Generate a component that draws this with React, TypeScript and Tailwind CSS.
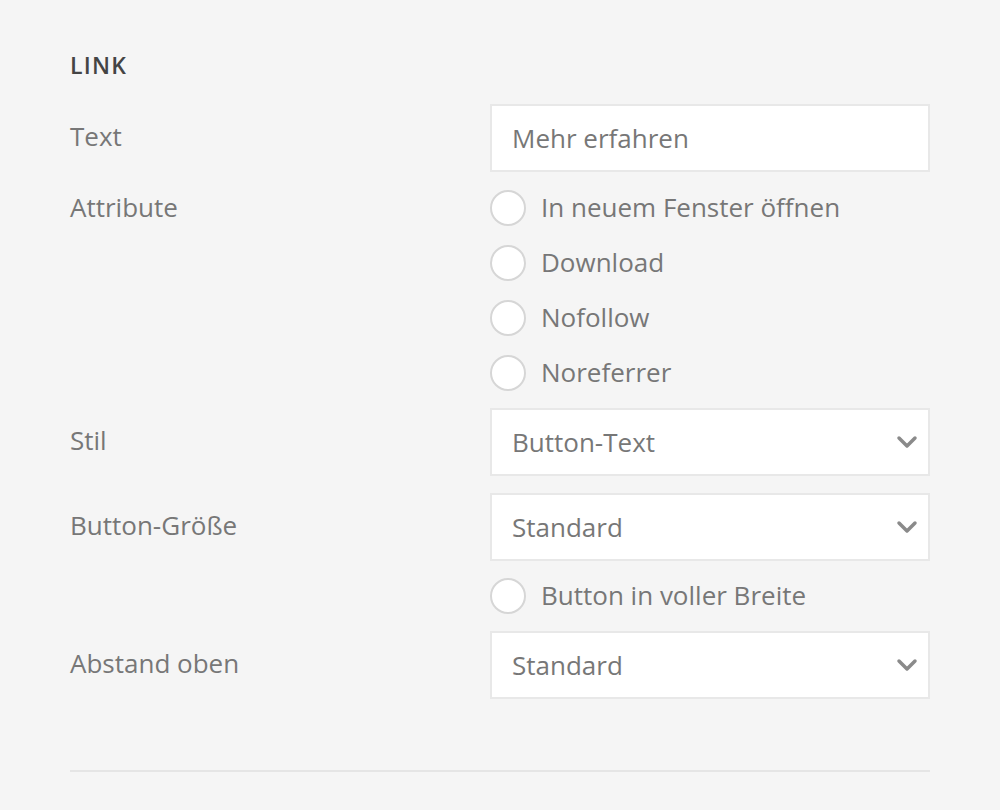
import React from "react";

const Chevron = () => (
  <svg width="22" height="14" viewBox="0 0 22 14" className="shrink-0">
    <path d="M3 3 L11 11 L19 3" fill="none" stroke="#8a8a8a" strokeWidth="3.5" strokeLinecap="round" strokeLinejoin="round" />
  </svg>
);

const Radio = ({ label }: { label: string }) => (
  <div className="flex items-center h-[36px]">
    <span className="w-[36px] h-[36px] rounded-full border-2 border-[#d6d6d6] bg-white shrink-0" />
    <span className="ml-[15px] text-[26px] text-[#777777] leading-[36px] mb-[3px]">{label}</span>
  </div>
);

const Select = ({ value }: { value: string }) => (
  <div className="h-[68px] bg-white border-2 border-[#e8e8e8] flex items-center justify-between pl-[20px] pr-[10px]">
    <span className="text-[26px] text-[#777777]">{value}</span>
    <Chevron />
  </div>
);

const Label = ({ children }: { children: React.ReactNode }) => (
  <div className="text-[26px] text-[#777777] leading-[36px]">{children}</div>
);

export default function App() {
  return (
    <div
      className="w-[1000px] h-[810px] bg-[#f5f5f5] px-[70px] pt-[49px]"
      style={{ fontFamily: '"Open Sans", "Noto Sans", sans-serif' }}
    >
      <div className="text-[23px] font-semibold text-[#444444] tracking-[1.2px] leading-[32px]">LINK</div>
      <div className="mt-[23px] grid grid-cols-[420px_440px] gap-y-[17px]">
        <div className="pt-[14px]"><Label>Text</Label></div>
        <div className="h-[68px] bg-white border-2 border-[#e8e8e8] flex items-center pl-[20px]">
          <span className="text-[26px] text-[#777777]">Mehr erfahren</span>
        </div>

        <div><Label>Attribute</Label></div>
        <div className="flex flex-col gap-[19px] pt-[1px]">
          <Radio label="In neuem Fenster öffnen" />
          <Radio label="Download" />
          <Radio label="Nofollow" />
          <Radio label="Noreferrer" />
        </div>

        <div className="pt-[14px]"><Label>Stil</Label></div>
        <Select value="Button-Text" />

        <div className="pt-[14px]"><Label>Button-Größe</Label></div>
        <div className="flex flex-col gap-[17px]">
          <Select value="Standard" />
          <Radio label="Button in voller Breite" />
        </div>

        <div className="pt-[14px]"><Label>Abstand oben</Label></div>
        <Select value="Standard" />
      </div>
      <div className="mt-[71px] h-[2px] bg-[#e5e5e5]" />
    </div>
  );
}
